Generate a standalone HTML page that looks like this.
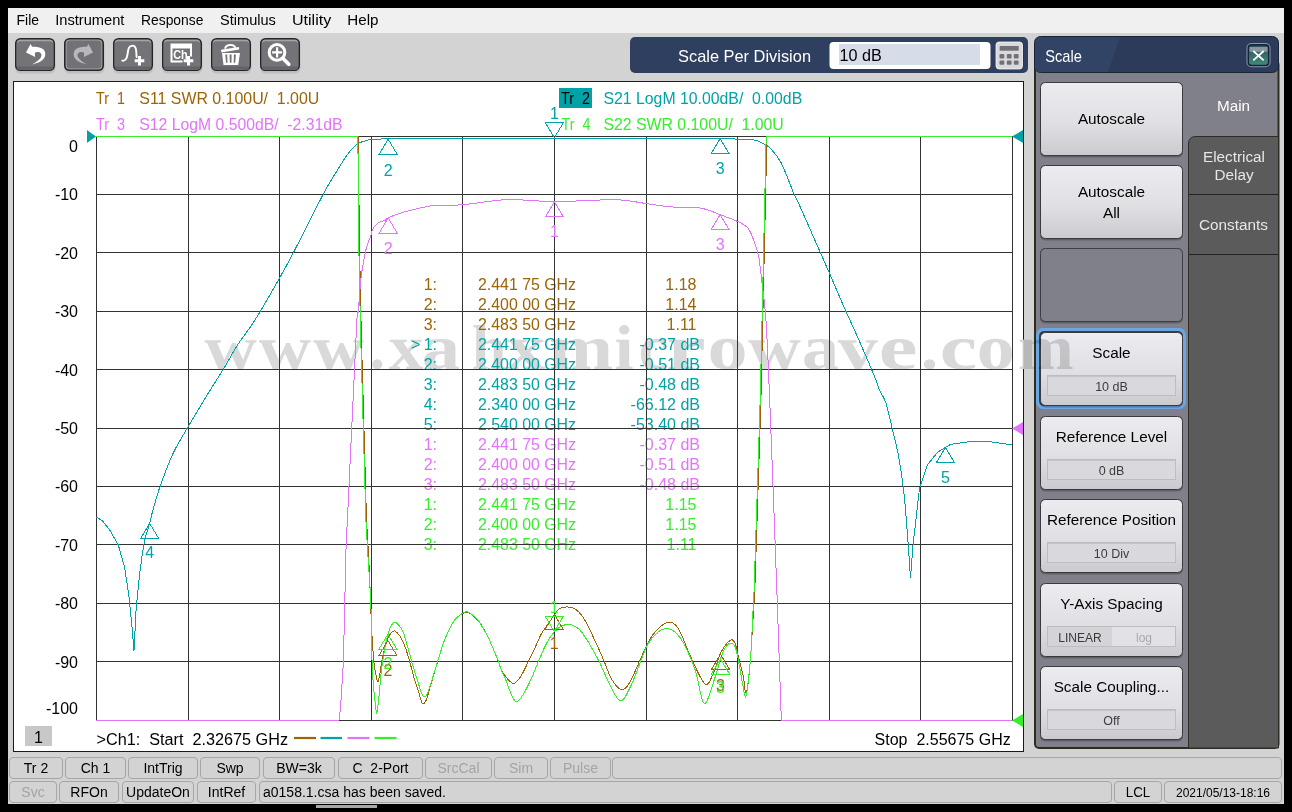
<!DOCTYPE html><html><head><meta charset="utf-8"><style>
*{margin:0;padding:0;box-sizing:border-box}
html,body{width:1292px;height:812px;overflow:hidden;background:#000;font-family:"Liberation Sans",sans-serif}
.a{position:absolute}
svg{position:absolute;left:0;top:0;overflow:visible}
text{font-family:"Liberation Sans",sans-serif}
</style></head><body><svg width="1292" height="812" viewBox="0 0 1292 812"><rect x="8" y="8" width="1276" height="25" fill="#f0f0f0"/><text x="16.5" y="25" font-size="14.5" fill="#000" textLength="22.5" lengthAdjust="spacingAndGlyphs" xml:space="preserve" >File</text><text x="55.2" y="25" font-size="14.5" fill="#000" textLength="69.2" lengthAdjust="spacingAndGlyphs" xml:space="preserve" >Instrument</text><text x="141" y="25" font-size="14.5" fill="#000" textLength="62.4" lengthAdjust="spacingAndGlyphs" xml:space="preserve" >Response</text><text x="220.1" y="25" font-size="14.5" fill="#000" textLength="55.8" lengthAdjust="spacingAndGlyphs" xml:space="preserve" >Stimulus</text><text x="292" y="25" font-size="14.5" fill="#000" textLength="39.2" lengthAdjust="spacingAndGlyphs" xml:space="preserve" >Utility</text><text x="347.3" y="25" font-size="14.5" fill="#000" textLength="31.2" lengthAdjust="spacingAndGlyphs" xml:space="preserve" >Help</text><rect x="8" y="33" width="1276" height="771" fill="#d3d3d3"/><g transform="translate(15,38)"><rect x="0" y="1.5" width="40.5" height="34" rx="5.5" fill="rgba(0,0,0,0.10)"/><rect x="0" y="0" width="40" height="33" rx="5.5" fill="#262628"/><rect x="1.6" y="1.6" width="36.8" height="29.8" rx="4" fill="#a4a4a8"/><rect x="1.8" y="3.2" width="36.4" height="28.2" rx="3.5" fill="#747478"/><rect x="1.8" y="28.5" width="36.4" height="3" rx="1.5" fill="#646468"/><path d="M11,14.4 L15.6,5.9 L17.1,8.8 C21,8.3 25.5,8.8 28.5,11.5 C31,14 30.8,18.5 28.5,21 C26,23.8 21.5,25.5 17,26.4 C20.5,24.5 24,22.5 25.8,19.5 C27,17.5 26.8,15 24.5,14.2 C23,13.7 21,14.1 19.9,14.6 L20.1,19.1 Z" fill="#fff"/></g><g transform="translate(64,38)"><rect x="0" y="1.5" width="40.5" height="34" rx="5.5" fill="rgba(0,0,0,0.10)"/><rect x="0" y="0" width="40" height="33" rx="5.5" fill="#262628"/><rect x="1.6" y="1.6" width="36.8" height="29.8" rx="4" fill="#a2a2a6"/><rect x="2.6" y="2.6" width="34.8" height="27.8" rx="3.5" fill="#727276"/><g transform="translate(40,0) scale(-1,1)"><path d="M11,14.4 L15.6,5.9 L17.1,8.8 C21,8.3 25.5,8.8 28.5,11.5 C31,14 30.8,18.5 28.5,21 C26,23.8 21.5,25.5 17,26.4 C20.5,24.5 24,22.5 25.8,19.5 C27,17.5 26.8,15 24.5,14.2 C23,13.7 21,14.1 19.9,14.6 L20.1,19.1 Z" fill="#b8b8bb"/></g></g><g transform="translate(113,38)"><rect x="0" y="1.5" width="40.5" height="34" rx="5.5" fill="rgba(0,0,0,0.10)"/><rect x="0" y="0" width="40" height="33" rx="5.5" fill="#262628"/><rect x="1.6" y="1.6" width="36.8" height="29.8" rx="4" fill="#a4a4a8"/><rect x="1.8" y="3.2" width="36.4" height="28.2" rx="3.5" fill="#747478"/><rect x="1.8" y="28.5" width="36.4" height="3" rx="1.5" fill="#646468"/><path d="M9.3,22.6 C12.5,23.2 13.8,20.5 14.5,16.5 C15.2,12 15.3,7.8 19.5,7.6 C23.2,7.6 23.2,12 23.6,19" fill="none" stroke="#fff" stroke-width="1.9" stroke-linecap="round"/><path d="M25,18 h3 v3.3 h3.3 v3 h-3.3 v3.3 h-3 v-3.3 h-3.3 v-3 h3.3 z" fill="#fff"/></g><g transform="translate(162,38)"><rect x="0" y="1.5" width="40.5" height="34" rx="5.5" fill="rgba(0,0,0,0.10)"/><rect x="0" y="0" width="40" height="33" rx="5.5" fill="#262628"/><rect x="1.6" y="1.6" width="36.8" height="29.8" rx="4" fill="#a4a4a8"/><rect x="1.8" y="3.2" width="36.4" height="28.2" rx="3.5" fill="#747478"/><rect x="1.8" y="28.5" width="36.4" height="3" rx="1.5" fill="#646468"/><path d="M8.5,5.5 h21.5 v13 h-2 v-8 h-17.5 v12 h10 v2 h-12 z" fill="#fff"/><text x="11.2" y="20.8" style="font-weight:bold" font-size="12.5" fill="#fff" textLength="14.5" lengthAdjust="spacingAndGlyphs">Ch</text><path d="M25,18 h3 v3.3 h3.3 v3 h-3.3 v3.3 h-3 v-3.3 h-3.3 v-3 h3.3 z" fill="#fff"/></g><g transform="translate(211,38)"><rect x="0" y="1.5" width="40.5" height="34" rx="5.5" fill="rgba(0,0,0,0.10)"/><rect x="0" y="0" width="40" height="33" rx="5.5" fill="#262628"/><rect x="1.6" y="1.6" width="36.8" height="29.8" rx="4" fill="#a4a4a8"/><rect x="1.8" y="3.2" width="36.4" height="28.2" rx="3.5" fill="#747478"/><rect x="1.8" y="28.5" width="36.4" height="3" rx="1.5" fill="#646468"/><path d="M14.2,10.8 C14.5,6.5 23,5.5 24.3,9.8" fill="none" stroke="#fff" stroke-width="2"/><path d="M10,11.8 L27.8,9 L28.2,11.6 L10.4,14.4 Z" fill="#fff"/><path d="M11,15 H29 L27.2,27 H12.5 Z M14.3,16.6 L15,24.7 H16.5 L16.2,16.6 Z M18.6,16.6 L18.8,24.7 H20.5 L20.6,16.6 Z M22.9,16.6 L22.7,24.7 H24.2 L24.9,16.6 Z" fill="#fff" fill-rule="evenodd"/></g><g transform="translate(260,38)"><rect x="0" y="1.5" width="40.5" height="34" rx="5.5" fill="rgba(0,0,0,0.10)"/><rect x="0" y="0" width="40" height="33" rx="5.5" fill="#262628"/><rect x="1.6" y="1.6" width="36.8" height="29.8" rx="4" fill="#a4a4a8"/><rect x="1.8" y="3.2" width="36.4" height="28.2" rx="3.5" fill="#747478"/><rect x="1.8" y="28.5" width="36.4" height="3" rx="1.5" fill="#646468"/><circle cx="17" cy="14.4" r="7.8" fill="none" stroke="#fff" stroke-width="3"/><line x1="22.8" y1="20.3" x2="28.8" y2="26.3" stroke="#fff" stroke-width="3.6" stroke-linecap="round"/><path d="M16,9.3 h2.2 v3.9 h3.9 v2.3 h-3.9 v3.9 h-2.2 v-3.9 h-3.9 v-2.3 h3.9 z" fill="#fff"/></g><rect x="630" y="37" width="398" height="36" rx="5" fill="#2e3f5f"/><text x="678" y="61.8" font-size="16.4" fill="#fff" textLength="133" lengthAdjust="spacingAndGlyphs" xml:space="preserve" >Scale Per Division</text><rect x="829.5" y="42" width="161" height="27" rx="4" fill="#fff"/><rect x="839" y="44" width="141" height="21" fill="#d6dde9"/><text x="839.5" y="60.8" font-size="16.2" fill="#000" xml:space="preserve" >10 dB</text><rect x="995" y="41" width="28.5" height="29" rx="4.5" fill="#1d2a42"/><rect x="995.5" y="41.5" width="27.5" height="28" rx="4" fill="#e4e4ea"/><rect x="997" y="43" width="25" height="25" rx="3" fill="#d8d8de"/><rect x="999.7" y="46" width="19" height="4.7" fill="#727272"/><rect x="999.5" y="54" width="4.8" height="4.4" rx="1" fill="#727272"/><rect x="999.5" y="60.4" width="4.8" height="4.4" rx="1" fill="#727272"/><rect x="1006.8" y="54" width="4.8" height="4.4" rx="1" fill="#727272"/><rect x="1006.8" y="60.4" width="4.8" height="4.4" rx="1" fill="#727272"/><rect x="1013.8" y="54" width="4.8" height="4.4" rx="1" fill="#727272"/><rect x="1013.8" y="60.4" width="4.8" height="4.4" rx="1" fill="#727272"/><rect x="13.5" y="81.5" width="1010" height="670" rx="0" fill="#fff" stroke="#1c1c0c" stroke-width="1"/><g font-size="64" fill="#d9d9d9"><text style="font-family:'Liberation Serif',serif;font-weight:bold" x="204.4" y="369" textLength="52.3" lengthAdjust="spacingAndGlyphs">w</text><text style="font-family:'Liberation Serif',serif;font-weight:bold" x="258.8" y="369" textLength="52.3" lengthAdjust="spacingAndGlyphs">w</text><text style="font-family:'Liberation Serif',serif;font-weight:bold" x="313.2" y="369" textLength="50.9" lengthAdjust="spacingAndGlyphs">w</text><text style="font-family:'Liberation Serif',serif;font-weight:bold" x="369.4" y="369" textLength="15.5" lengthAdjust="spacingAndGlyphs">.</text><text style="font-family:'Liberation Serif',serif;font-weight:bold" x="388.8" y="369" textLength="34.7" lengthAdjust="spacingAndGlyphs">x</text><text style="font-family:'Liberation Serif',serif;font-weight:bold" x="421.7" y="369" textLength="38.3" lengthAdjust="spacingAndGlyphs">a</text><text style="font-family:'Liberation Serif',serif;font-weight:bold" x="471.7" y="369" textLength="34.6" lengthAdjust="spacingAndGlyphs">h</text><text style="font-family:'Liberation Serif',serif;font-weight:bold" x="506.0" y="369" textLength="39.4" lengthAdjust="spacingAndGlyphs">x</text><text style="font-family:'Liberation Serif',serif;font-weight:bold" x="548.9" y="369" textLength="64.1" lengthAdjust="spacingAndGlyphs">m</text><text style="font-family:'Liberation Serif',serif;font-weight:bold" x="614.6" y="369" textLength="19.1" lengthAdjust="spacingAndGlyphs">i</text><text style="font-family:'Liberation Serif',serif;font-weight:bold" x="638.4" y="369" textLength="30.0" lengthAdjust="spacingAndGlyphs">c</text><text style="font-family:'Liberation Serif',serif;font-weight:bold" x="666.3" y="369" textLength="39.5" lengthAdjust="spacingAndGlyphs">r</text><text style="font-family:'Liberation Serif',serif;font-weight:bold" x="707.4" y="369" textLength="40.1" lengthAdjust="spacingAndGlyphs">o</text><text style="font-family:'Liberation Serif',serif;font-weight:bold" x="748.2" y="369" textLength="52.6" lengthAdjust="spacingAndGlyphs">w</text><text style="font-family:'Liberation Serif',serif;font-weight:bold" x="801.8" y="369" textLength="37.4" lengthAdjust="spacingAndGlyphs">a</text><text style="font-family:'Liberation Serif',serif;font-weight:bold" x="837.7" y="369" textLength="40.1" lengthAdjust="spacingAndGlyphs">v</text><text style="font-family:'Liberation Serif',serif;font-weight:bold" x="878.7" y="369" textLength="38.7" lengthAdjust="spacingAndGlyphs">e</text><text style="font-family:'Liberation Serif',serif;font-weight:bold" x="920.8" y="369" textLength="17.6" lengthAdjust="spacingAndGlyphs">.</text><text style="font-family:'Liberation Serif',serif;font-weight:bold" x="939.7" y="369" textLength="37.3" lengthAdjust="spacingAndGlyphs">c</text><text style="font-family:'Liberation Serif',serif;font-weight:bold" x="976.7" y="369" textLength="38.0" lengthAdjust="spacingAndGlyphs">o</text><text style="font-family:'Liberation Serif',serif;font-weight:bold" x="1017.7" y="369" textLength="55.9" lengthAdjust="spacingAndGlyphs">m</text></g><g font-size="17"><text x="96" y="104" fill="#9c6406" textLength="29" lengthAdjust="spacingAndGlyphs" xml:space="preserve">Tr  1</text><text x="139.3" y="104" fill="#9c6406" textLength="180" lengthAdjust="spacingAndGlyphs" xml:space="preserve">S11 SWR 0.100U/  1.00U</text><text x="96" y="129.6" fill="#e274fa" textLength="29" lengthAdjust="spacingAndGlyphs" xml:space="preserve">Tr  3</text><text x="139.3" y="129.6" fill="#e274fa" textLength="203.2" lengthAdjust="spacingAndGlyphs" xml:space="preserve">S12 LogM 0.500dB/  -2.31dB</text><rect x="559" y="88" width="33" height="20" fill="#00a2a8"/><text x="561" y="104" fill="#000" textLength="29" lengthAdjust="spacingAndGlyphs" xml:space="preserve">Tr  2</text><text x="603.5" y="104" fill="#00a2a8" textLength="198.7" lengthAdjust="spacingAndGlyphs" xml:space="preserve">S21 LogM 10.00dB/  0.00dB</text><text x="561.5" y="129.6" fill="#36ee2c" textLength="29" lengthAdjust="spacingAndGlyphs" xml:space="preserve">Tr  4</text><text x="603.5" y="129.6" fill="#36ee2c" textLength="180.3" lengthAdjust="spacingAndGlyphs" xml:space="preserve">S22 SWR 0.100U/  1.00U</text></g><g font-size="16" fill="#000"><text x="78" y="151.5" text-anchor="end">0</text><text x="78" y="200" text-anchor="end">-10</text><text x="78" y="258.5" text-anchor="end">-20</text><text x="78" y="317" text-anchor="end">-30</text><text x="78" y="375.5" text-anchor="end">-40</text><text x="78" y="434" text-anchor="end">-50</text><text x="78" y="492" text-anchor="end">-60</text><text x="78" y="550.5" text-anchor="end">-70</text><text x="78" y="609" text-anchor="end">-80</text><text x="78" y="667.5" text-anchor="end">-90</text><text x="78" y="713.5" text-anchor="end">-100</text></g><g font-size="16"><text x="437" y="290" fill="#9c6406" text-anchor="end">1:</text><text x="478" y="290" fill="#9c6406" textLength="98" lengthAdjust="spacingAndGlyphs">2.441 75 GHz</text><text x="696.5" y="290" fill="#9c6406" text-anchor="end">1.18</text><text x="437" y="310" fill="#9c6406" text-anchor="end">2:</text><text x="478" y="310" fill="#9c6406" textLength="98" lengthAdjust="spacingAndGlyphs">2.400 00 GHz</text><text x="696.5" y="310" fill="#9c6406" text-anchor="end">1.14</text><text x="437" y="330" fill="#9c6406" text-anchor="end">3:</text><text x="478" y="330" fill="#9c6406" textLength="98" lengthAdjust="spacingAndGlyphs">2.483 50 GHz</text><text x="696.5" y="330" fill="#9c6406" text-anchor="end">1.11</text><text x="411" y="350" fill="#00a2a8">&gt;</text><text x="437" y="350" fill="#00a2a8" text-anchor="end">1:</text><text x="478" y="350" fill="#00a2a8" textLength="98" lengthAdjust="spacingAndGlyphs">2.441 75 GHz</text><text x="700" y="350" fill="#00a2a8" text-anchor="end">-0.37 dB</text><text x="437" y="370" fill="#00a2a8" text-anchor="end">2:</text><text x="478" y="370" fill="#00a2a8" textLength="98" lengthAdjust="spacingAndGlyphs">2.400 00 GHz</text><text x="700" y="370" fill="#00a2a8" text-anchor="end">-0.51 dB</text><text x="437" y="390" fill="#00a2a8" text-anchor="end">3:</text><text x="478" y="390" fill="#00a2a8" textLength="98" lengthAdjust="spacingAndGlyphs">2.483 50 GHz</text><text x="700" y="390" fill="#00a2a8" text-anchor="end">-0.48 dB</text><text x="437" y="410" fill="#00a2a8" text-anchor="end">4:</text><text x="478" y="410" fill="#00a2a8" textLength="98" lengthAdjust="spacingAndGlyphs">2.340 00 GHz</text><text x="700" y="410" fill="#00a2a8" text-anchor="end">-66.12 dB</text><text x="437" y="430" fill="#00a2a8" text-anchor="end">5:</text><text x="478" y="430" fill="#00a2a8" textLength="98" lengthAdjust="spacingAndGlyphs">2.540 00 GHz</text><text x="700" y="430" fill="#00a2a8" text-anchor="end">-53.40 dB</text><text x="437" y="450" fill="#e274fa" text-anchor="end">1:</text><text x="478" y="450" fill="#e274fa" textLength="98" lengthAdjust="spacingAndGlyphs">2.441 75 GHz</text><text x="700" y="450" fill="#e274fa" text-anchor="end">-0.37 dB</text><text x="437" y="470" fill="#e274fa" text-anchor="end">2:</text><text x="478" y="470" fill="#e274fa" textLength="98" lengthAdjust="spacingAndGlyphs">2.400 00 GHz</text><text x="700" y="470" fill="#e274fa" text-anchor="end">-0.51 dB</text><text x="437" y="490" fill="#e274fa" text-anchor="end">3:</text><text x="478" y="490" fill="#e274fa" textLength="98" lengthAdjust="spacingAndGlyphs">2.483 50 GHz</text><text x="700" y="490" fill="#e274fa" text-anchor="end">-0.48 dB</text><text x="437" y="510" fill="#36ee2c" text-anchor="end">1:</text><text x="478" y="510" fill="#36ee2c" textLength="98" lengthAdjust="spacingAndGlyphs">2.441 75 GHz</text><text x="696.5" y="510" fill="#36ee2c" text-anchor="end">1.15</text><text x="437" y="530" fill="#36ee2c" text-anchor="end">2:</text><text x="478" y="530" fill="#36ee2c" textLength="98" lengthAdjust="spacingAndGlyphs">2.400 00 GHz</text><text x="696.5" y="530" fill="#36ee2c" text-anchor="end">1.15</text><text x="437" y="550" fill="#36ee2c" text-anchor="end">3:</text><text x="478" y="550" fill="#36ee2c" textLength="98" lengthAdjust="spacingAndGlyphs">2.483 50 GHz</text><text x="696.5" y="550" fill="#36ee2c" text-anchor="end">1.11</text></g><g stroke="#333333" stroke-width="1" shape-rendering="crispEdges"><line x1="96.5" y1="136" x2="96.5" y2="721" /><line x1="188.5" y1="136" x2="188.5" y2="721" /><line x1="279.5" y1="136" x2="279.5" y2="721" /><line x1="371.5" y1="136" x2="371.5" y2="721" /><line x1="462.5" y1="136" x2="462.5" y2="721" /><line x1="554.5" y1="136" x2="554.5" y2="721" /><line x1="646.5" y1="136" x2="646.5" y2="721" /><line x1="737.5" y1="136" x2="737.5" y2="721" /><line x1="829.5" y1="136" x2="829.5" y2="721" /><line x1="920.5" y1="136" x2="920.5" y2="721" /><line x1="1012.5" y1="136" x2="1012.5" y2="721" /><line x1="96" y1="136.5" x2="1013" y2="136.5" /><line x1="96" y1="194.5" x2="1013" y2="194.5" /><line x1="96" y1="252.5" x2="1013" y2="252.5" /><line x1="96" y1="311.5" x2="1013" y2="311.5" /><line x1="96" y1="369.5" x2="1013" y2="369.5" /><line x1="96" y1="428.5" x2="1013" y2="428.5" /><line x1="96" y1="486.5" x2="1013" y2="486.5" /><line x1="96" y1="544.5" x2="1013" y2="544.5" /><line x1="96" y1="603.5" x2="1013" y2="603.5" /><line x1="96" y1="661.5" x2="1013" y2="661.5" /><line x1="96" y1="720.5" x2="1013" y2="720.5" /></g><g fill="none" stroke-width="1" stroke-linejoin="round" shape-rendering="crispEdges"><path d="M96.0,136.5 L358.5,136.5 L359.2,230.0 L361.2,330.0 L366.5,520.0 L368.8,560.0 L370.5,600.0 L371.6,629.6 C372.0,635.0 373.1,654.4 373.9,662.0 C374.6,669.6 375.4,672.1 376.1,675.4 C376.8,678.7 377.4,682.2 378.0,682.0 C378.6,681.8 379.0,678.2 379.8,673.9 C380.6,669.6 381.5,661.9 382.7,656.2 C383.9,650.6 385.8,643.8 387.2,640.0 C388.6,636.2 389.7,634.7 390.9,633.2 C392.1,631.7 393.0,630.4 394.6,631.0 C396.2,631.6 398.7,634.3 400.5,637.0 C402.3,639.7 403.8,643.1 405.3,647.3 C406.9,651.5 408.3,656.9 409.8,662.1 C411.3,667.3 412.7,673.4 414.2,678.3 C415.7,683.2 417.2,687.4 418.6,691.6 C420.0,695.8 421.1,701.9 422.3,703.4 C423.5,704.9 424.6,703.5 426.0,700.5 C427.4,697.5 428.5,692.4 430.5,685.7 C432.5,679.1 435.4,668.5 437.9,660.6 C440.3,652.7 442.5,645.0 445.2,638.4 C447.9,631.8 451.4,624.8 454.1,620.7 C456.8,616.6 459.3,615.4 461.5,614.0 C463.7,612.6 466.0,612.7 467.4,612.6 C468.8,612.5 468.0,612.0 470.0,613.5 C472.0,615.0 476.1,617.8 479.2,621.9 C482.3,626.0 485.4,631.8 488.5,638.1 C491.6,644.4 495.6,654.5 497.7,659.6 C499.8,664.7 499.3,665.7 500.8,668.8 C502.3,671.9 504.7,675.6 506.9,678.1 C509.1,680.6 511.5,683.8 513.8,683.5 C516.1,683.2 518.3,680.2 520.8,676.5 C523.2,672.8 526.2,665.8 528.5,661.2 C530.8,656.6 532.6,653.2 534.6,648.8 C536.6,644.4 538.8,638.8 540.8,635.0 C542.8,631.2 544.6,629.1 546.9,625.8 C549.1,622.5 552.2,617.8 554.3,615.0 C556.3,612.2 557.0,610.1 559.2,608.8 C561.4,607.4 564.8,606.8 567.6,606.9 C570.4,607.0 573.0,607.4 576.0,609.7 C579.0,612.0 581.0,613.1 585.3,620.9 C589.6,628.6 597.7,646.6 602.0,656.2 C606.3,665.8 608.0,672.9 611.3,678.5 C614.5,684.1 618.4,689.0 621.5,689.6 C624.6,690.2 626.6,687.5 629.9,682.2 C633.1,676.9 637.3,665.8 641.0,658.0 C644.7,650.2 647.9,641.6 652.2,635.7 C656.5,629.8 662.7,623.9 667.0,622.7 C671.3,621.5 674.2,622.4 678.2,628.3 C682.2,634.2 686.7,648.7 691.2,658.0 C695.7,667.3 701.4,681.5 705.1,684.0 C708.8,686.5 710.9,678.1 713.5,672.9 C716.1,667.6 718.1,657.9 720.9,652.5 C723.7,647.1 727.9,641.9 730.2,640.4 C732.6,638.9 733.6,640.5 735.0,643.2 C736.4,645.9 736.9,651.0 738.3,656.5 C739.7,662.0 742.1,670.3 743.3,676.4 C744.5,682.5 744.9,691.9 745.7,693.0 C746.5,694.1 747.4,689.1 748.2,683.0 C749.0,676.9 750.3,660.9 750.7,656.5 L754.8,590.0 L760.9,400.0 L764.1,260.0 L766.9,136.5 L1012.0,136.5" stroke="#9c6406"/><path d="M96.0,516.8 L102.6,520.9 L109.9,530.4 L118.3,545.0 L124.5,567.0 L128.7,594.2 L131.9,625.6 L134.0,650.8 L136.1,608.9 C136.8,602.3 138.9,580.3 140.3,569.1 C141.7,557.9 142.8,549.6 144.4,541.9 C146.0,534.2 148.3,528.2 149.7,523.0 C151.1,517.8 151.1,516.6 152.8,510.5 C154.6,504.4 156.8,495.6 160.2,486.1 C163.6,476.6 168.4,463.2 173.1,453.3 C177.8,443.4 182.9,435.8 188.3,426.4 C193.8,417.0 200.0,406.8 205.8,397.2 C211.7,387.6 217.9,378.1 223.4,369.1 C228.9,360.1 233.3,351.6 238.6,343.4 C243.9,335.2 248.2,330.9 255.0,320.0 C261.9,309.1 273.1,289.4 279.7,277.8 C286.3,266.2 287.0,264.9 294.4,250.7 C301.8,236.5 317.0,205.9 324.0,192.8 C331.0,179.7 332.4,178.3 336.3,171.9 C340.2,165.5 344.7,158.5 347.4,154.6 C350.1,150.7 350.6,150.3 352.3,148.5 C354.1,146.7 355.8,144.7 357.9,143.5 C359.9,142.3 361.8,141.8 364.6,141.1 C367.4,140.4 366.1,139.6 374.5,139.2 C382.9,138.8 384.1,138.9 415.0,138.7 C445.9,138.5 512.3,138.2 560.0,138.2 C607.7,138.2 669.4,138.4 701.0,138.6 C732.6,138.8 739.6,138.9 749.5,139.5 C759.4,140.1 757.2,140.9 760.6,142.3 C764.0,143.7 766.5,144.5 769.9,147.9 C773.3,151.3 777.1,155.0 781.1,162.7 C785.1,170.4 791.0,187.0 794.1,194.3 C797.2,201.6 795.7,196.8 800.0,206.4 C804.3,216.0 815.2,240.9 820.1,252.0 C825.0,263.1 824.9,262.8 829.2,272.7 C833.5,282.6 841.0,300.3 846.0,311.5 C851.0,322.7 854.2,329.2 858.9,340.0 C863.6,350.8 871.0,367.8 874.4,376.1 C877.8,384.4 877.5,385.5 879.4,390.0 C881.3,394.5 883.8,396.4 885.9,402.9 C888.0,409.4 890.1,419.7 892.3,428.8 C894.4,437.9 896.8,446.5 898.8,457.3 C900.8,468.1 902.5,479.7 904.0,493.5 C905.5,507.3 907.2,532.3 907.9,540.1 L910.5,577.6 L913.0,545.2 L919.5,488.3 L927.3,465.0 L937.6,452.1 L950.6,444.3 L968.7,441.7 L989.4,441.7 L1012.0,444.9" stroke="#00a2a8"/><path d="M96.0,720.0 L339.3,720.0 L341.0,700.0 L343.4,661.8 L346.1,545.2 L347.4,520.0 C348.9,488.3 354.7,364.2 356.4,330.0 C358.1,295.8 357.4,319.6 357.8,314.8 C358.2,310.0 358.6,307.5 359.1,301.2 C359.7,294.9 360.3,283.7 361.1,276.9 C361.9,270.1 362.9,265.6 363.8,260.6 C364.7,255.6 365.5,251.2 366.6,247.1 C367.7,243.0 369.5,239.4 370.6,236.2 C371.7,233.0 372.0,230.3 373.3,228.1 C374.6,225.8 376.7,224.0 378.7,222.7 C380.7,221.3 383.9,220.8 385.5,220.0 C387.1,219.2 385.6,219.2 388.2,218.0 C390.8,216.8 393.8,214.9 401.0,212.9 C408.2,210.9 421.3,207.2 431.5,205.8 C441.7,204.5 449.5,205.8 462.0,204.8 C474.5,203.8 491.3,200.2 506.7,199.7 C522.1,199.2 540.6,201.6 554.4,201.7 C568.2,201.8 580.4,200.6 589.7,200.3 C599.0,200.0 604.3,199.9 610.2,199.9 C616.1,199.9 619.0,199.7 625.0,200.3 C631.0,200.9 638.6,202.5 646.4,203.6 C654.1,204.7 662.4,206.1 671.5,206.9 C680.6,207.7 693.1,206.9 701.2,208.2 C709.3,209.5 713.9,212.4 720.1,214.7 C726.3,217.0 733.7,219.6 738.3,221.8 C742.9,224.0 745.1,224.8 747.6,227.7 C750.1,230.5 751.6,234.8 753.2,238.9 C754.9,243.0 756.5,248.5 757.5,252.0 C758.5,255.5 758.5,254.8 759.3,260.0 C760.0,265.2 760.9,273.1 762.0,283.0 C763.1,292.9 764.6,299.8 765.9,319.3 C767.2,338.8 767.8,353.2 769.7,400.0 C771.6,446.8 776.0,566.7 777.2,600.0 L781.3,720.0 L1012.0,720.0" stroke="#e274fa"/><path d="M96.0,136.5 L357.9,136.5 L358.5,230.0 L360.5,330.0 L365.9,520.0 L368.2,560.0 L370.9,600.0 L371.6,651.7 C371.9,656.6 372.5,672.7 373.1,681.3 C373.7,689.9 374.7,698.1 375.3,703.4 C375.9,708.7 376.2,714.2 376.8,713.0 C377.4,711.8 378.2,703.0 379.0,696.0 C379.8,689.0 380.6,677.7 381.3,671.0 C382.1,664.3 382.5,661.7 383.5,656.0 C384.5,650.3 385.8,642.2 387.2,637.0 C388.6,631.8 390.2,627.5 391.6,625.0 C393.0,622.5 393.8,621.7 395.3,622.2 C396.9,622.7 399.5,626.1 400.9,628.1 C402.3,630.1 402.5,630.1 403.9,634.0 C405.2,637.9 407.5,646.5 409.0,651.7 C410.5,656.9 411.3,660.3 412.7,665.0 C414.1,669.7 415.7,675.1 417.2,679.8 C418.7,684.5 420.4,690.3 421.6,693.1 C422.8,695.9 423.6,696.8 424.6,696.8 C425.6,696.8 426.3,695.9 427.5,693.1 C428.7,690.3 430.3,685.2 432.0,679.8 C433.7,674.4 435.7,667.5 437.9,660.6 C440.1,653.7 442.5,645.0 445.2,638.4 C447.9,631.8 451.4,624.8 454.1,620.7 C456.8,616.6 459.3,615.5 461.5,614.0 C463.7,612.5 465.1,611.3 467.4,611.8 C469.6,612.3 473.0,615.3 475.0,617.0 C477.0,618.7 476.9,618.4 479.2,621.9 C481.4,625.4 485.4,631.8 488.5,638.1 C491.6,644.4 495.6,654.5 497.7,659.6 C499.8,664.7 499.3,664.9 500.8,668.8 C502.3,672.6 505.1,678.3 506.9,682.7 C508.7,687.1 509.8,691.8 511.5,695.0 C513.2,698.2 514.9,702.1 516.9,701.9 C518.9,701.6 521.4,697.5 523.8,693.5 C526.2,689.5 528.9,683.8 531.5,678.1 C534.1,672.5 536.6,665.5 539.2,659.6 C541.8,653.7 544.4,647.3 546.9,642.7 C549.4,638.1 551.7,634.7 554.3,631.9 C556.9,629.1 559.6,627.0 562.3,625.8 C565.0,624.6 567.2,623.6 570.4,624.6 C573.6,625.6 577.0,626.1 581.6,632.0 C586.2,637.9 593.7,651.2 598.3,659.9 C602.9,668.6 605.7,677.2 609.4,684.0 C613.1,690.8 616.9,700.8 620.6,700.8 C624.3,700.8 627.1,693.6 631.7,684.0 C636.4,674.4 642.9,652.4 648.5,643.2 C654.1,634.0 660.0,629.6 665.2,628.7 C670.5,627.8 675.0,630.9 680.0,637.6 C685.0,644.4 690.9,658.2 694.9,669.2 C698.9,680.2 700.8,702.3 704.2,703.5 C707.6,704.7 712.5,684.2 715.3,676.6 C718.1,669.0 719.2,662.8 720.8,658.1 C722.4,653.4 723.5,650.7 725.0,648.2 C726.5,645.7 728.3,643.5 730.0,643.2 C731.7,642.9 733.6,643.7 735.0,646.5 C736.4,649.3 737.1,653.7 738.3,659.8 C739.5,665.9 741.2,676.8 742.4,683.0 C743.6,689.2 744.7,697.5 745.7,697.2 C746.7,696.9 747.4,688.2 748.2,681.4 C749.0,674.6 750.0,666.2 750.7,656.5 C751.4,646.8 752.1,628.8 752.4,623.2 L754.1,590.0 L760.2,400.0 L763.4,260.0 L766.2,136.5 L1012.0,136.5" stroke="#36ee2c"/></g><polygon points="554.4,137.7 545.4,122.7 563.4,122.7" fill="none" stroke="#00a2a8" stroke-width="1" shape-rendering="crispEdges"/><text x="554.4" y="119.0" fill="#00a2a8" font-size="16" text-anchor="middle">1</text><polygon points="388.2,139.3 379.2,154.3 397.2,154.3" fill="none" stroke="#00a2a8" stroke-width="1" shape-rendering="crispEdges"/><text x="388.2" y="175.5" fill="#00a2a8" font-size="16" text-anchor="middle">2</text><polygon points="720.1,138.6 711.1,153.6 729.1,153.6" fill="none" stroke="#00a2a8" stroke-width="1" shape-rendering="crispEdges"/><text x="720.1" y="173.5" fill="#00a2a8" font-size="16" text-anchor="middle">3</text><polygon points="149.7,523.5 140.7,538.5 158.7,538.5" fill="none" stroke="#00a2a8" stroke-width="1" shape-rendering="crispEdges"/><text x="149.7" y="558.0" fill="#00a2a8" font-size="16" text-anchor="middle">4</text><polygon points="945.4,447.4 936.4,462.4 954.4,462.4" fill="none" stroke="#00a2a8" stroke-width="1" shape-rendering="crispEdges"/><text x="945.4" y="483.0" fill="#00a2a8" font-size="16" text-anchor="middle">5</text><polygon points="554.4,201.7 545.4,216.7 563.4,216.7" fill="none" stroke="#e274fa" stroke-width="1" shape-rendering="crispEdges"/><text x="554.4" y="237.0" fill="#e274fa" font-size="16" text-anchor="middle">1</text><polygon points="388.2,218.0 379.2,233.0 397.2,233.0" fill="none" stroke="#e274fa" stroke-width="1" shape-rendering="crispEdges"/><text x="388.2" y="254.0" fill="#e274fa" font-size="16" text-anchor="middle">2</text><polygon points="720.1,214.7 711.1,229.7 729.1,229.7" fill="none" stroke="#e274fa" stroke-width="1" shape-rendering="crispEdges"/><text x="720.1" y="249.5" fill="#e274fa" font-size="16" text-anchor="middle">3</text><polygon points="554.3,614.2 545.3,629.2 563.3,629.2" fill="none" stroke="#9c6406" stroke-width="1" shape-rendering="crispEdges"/><text x="554.3" y="649.0" fill="#9c6406" font-size="16" text-anchor="middle">1</text><polygon points="387.9,640.5 378.9,655.5 396.9,655.5" fill="none" stroke="#9c6406" stroke-width="1" shape-rendering="crispEdges"/><text x="387.9" y="676.0" fill="#9c6406" font-size="16" text-anchor="middle">2</text><polygon points="720.5,654.3 711.5,669.3 729.5,669.3" fill="none" stroke="#9c6406" stroke-width="1" shape-rendering="crispEdges"/><text x="720.5" y="691.0" fill="#9c6406" font-size="16" text-anchor="middle">3</text><polygon points="554.3,631.5 545.3,616.5 563.3,616.5" fill="none" stroke="#36ee2c" stroke-width="1" shape-rendering="crispEdges"/><text x="554.3" y="613.0" fill="#36ee2c" font-size="16" text-anchor="middle">1</text><polygon points="387.9,634.2 378.9,649.2 396.9,649.2" fill="none" stroke="#36ee2c" stroke-width="1" shape-rendering="crispEdges"/><text x="387.9" y="669.0" fill="#36ee2c" font-size="16" text-anchor="middle">2</text><polygon points="720.5,659.0 711.5,674.0 729.5,674.0" fill="none" stroke="#36ee2c" stroke-width="1" shape-rendering="crispEdges"/><text x="720.5" y="693.0" fill="#36ee2c" font-size="16" text-anchor="middle">3</text><polygon points="87,130 96,136.5 87,143" fill="#00a2a8"/><polygon points="1023,130 1012,136.5 1023,143" fill="#00a2a8"/><polygon points="1023,422 1012,428.5 1023,435" fill="#e274fa"/><polygon points="1023,714 1012,720.5 1023,727" fill="#36ee2c"/><rect x="25" y="726" width="27" height="20" fill="#c8c8c8"/><text x="38.5" y="743" font-size="16" text-anchor="middle" fill="#000">1</text><text x="96.5" y="744.5" font-size="16" fill="#000" textLength="191.5" lengthAdjust="spacingAndGlyphs" xml:space="preserve">&gt;Ch1:  Start  2.32675 GHz</text><g stroke-width="2.2"><line x1="294" y1="738" x2="316" y2="738" stroke="#9c6406"/><line x1="320.5" y1="738" x2="342" y2="738" stroke="#00a2a8"/><line x1="347.5" y1="738" x2="369.5" y2="738" stroke="#e274fa"/><line x1="374.5" y1="738" x2="396.5" y2="738" stroke="#36ee2c"/></g><text x="1010.7" y="744.5" font-size="16" fill="#000" text-anchor="end" xml:space="preserve">Stop  2.55675 GHz</text><rect x="9.5" y="757.5" width="53" height="21" rx="3.5" fill="#d3d3d3" stroke="#a6a6a6"/><text x="36.0" y="773" font-size="14" fill="#000" text-anchor="middle" xml:space="preserve" >Tr 2</text><rect x="65.5" y="757.5" width="60" height="21" rx="3.5" fill="#d3d3d3" stroke="#a6a6a6"/><text x="95.5" y="773" font-size="14" fill="#000" text-anchor="middle" xml:space="preserve" >Ch 1</text><rect x="128.5" y="757.5" width="69" height="21" rx="3.5" fill="#d3d3d3" stroke="#a6a6a6"/><text x="163.0" y="773" font-size="14" fill="#000" text-anchor="middle" xml:space="preserve" >IntTrig</text><rect x="200.5" y="757.5" width="59" height="21" rx="3.5" fill="#d3d3d3" stroke="#a6a6a6"/><text x="230.0" y="773" font-size="14" fill="#000" text-anchor="middle" xml:space="preserve" >Swp</text><rect x="263.5" y="757.5" width="71" height="21" rx="3.5" fill="#d3d3d3" stroke="#a6a6a6"/><text x="299.0" y="773" font-size="14" fill="#000" text-anchor="middle" xml:space="preserve" >BW=3k</text><rect x="338.5" y="757.5" width="84" height="21" rx="3.5" fill="#d3d3d3" stroke="#a6a6a6"/><text x="380.5" y="773" font-size="14" fill="#000" text-anchor="middle" xml:space="preserve" >C  2-Port</text><rect x="425.5" y="757.5" width="66" height="21" rx="3.5" fill="#d3d3d3" stroke="#a6a6a6"/><text x="458.5" y="773" font-size="14" fill="#a4a4a4" text-anchor="middle" xml:space="preserve" >SrcCal</text><rect x="494.5" y="757.5" width="53" height="21" rx="3.5" fill="#d3d3d3" stroke="#a6a6a6"/><text x="521.0" y="773" font-size="14" fill="#a4a4a4" text-anchor="middle" xml:space="preserve" >Sim</text><rect x="550.5" y="757.5" width="60" height="21" rx="3.5" fill="#d3d3d3" stroke="#a6a6a6"/><text x="580.5" y="773" font-size="14" fill="#a4a4a4" text-anchor="middle" xml:space="preserve" >Pulse</text><rect x="612.5" y="757.5" width="669" height="21" rx="3.5" fill="#d3d3d3" stroke="#a6a6a6"/><rect x="9.5" y="781.5" width="47" height="21" rx="3.5" fill="#d3d3d3" stroke="#a6a6a6"/><text x="33.0" y="797" font-size="14" fill="#a4a4a4" text-anchor="middle" xml:space="preserve" >Svc</text><rect x="59.5" y="781.5" width="59" height="21" rx="3.5" fill="#d3d3d3" stroke="#a6a6a6"/><text x="89.0" y="797" font-size="14" fill="#000" text-anchor="middle" xml:space="preserve" >RFOn</text><rect x="122.5" y="781.5" width="71" height="21" rx="3.5" fill="#d3d3d3" stroke="#a6a6a6"/><text x="158.0" y="797" font-size="14" fill="#000" text-anchor="middle" xml:space="preserve" >UpdateOn</text><rect x="197.5" y="781.5" width="58" height="21" rx="3.5" fill="#d3d3d3" stroke="#a6a6a6"/><text x="226.5" y="797" font-size="14" fill="#000" text-anchor="middle" xml:space="preserve" >IntRef</text><rect x="259.5" y="781.5" width="852" height="21" rx="3.5" fill="#d3d3d3" stroke="#a6a6a6"/><text x="263" y="797" font-size="14" fill="#000" xml:space="preserve" >a0158.1.csa has been saved.</text><rect x="1114.5" y="781.5" width="47" height="21" rx="3.5" fill="#d3d3d3" stroke="#a6a6a6"/><text x="1138.0" y="797" font-size="14" fill="#000" text-anchor="middle" textLength="24.5" lengthAdjust="spacingAndGlyphs" xml:space="preserve" >LCL</text><rect x="1164.5" y="781.5" width="117" height="21" rx="3.5" fill="#d3d3d3" stroke="#a6a6a6"/><text x="1223.0" y="797" font-size="12.5" fill="#000" text-anchor="middle" textLength="94" lengthAdjust="spacingAndGlyphs" xml:space="preserve" >2021/05/13-18:16</text><rect x="316" y="805" width="61" height="3" fill="#a8a8a8"/><defs><linearGradient id="bg" x1="0" y1="0" x2="0" y2="1"><stop offset="0" stop-color="#ececf0"/><stop offset="0.55" stop-color="#e0e0e4"/><stop offset="1" stop-color="#cbcbcf"/></linearGradient><linearGradient id="hd" x1="0" y1="0" x2="0" y2="1"><stop offset="0" stop-color="#33476a"/><stop offset="1" stop-color="#2a3a58"/></linearGradient><linearGradient id="xb" x1="0" y1="0" x2="0" y2="1"><stop offset="0" stop-color="#2b4f5c"/><stop offset="1" stop-color="#3f8a78"/></linearGradient></defs><rect x="1035" y="60.5" width="243.5" height="687.5" rx="4" fill="#80808a" stroke="#2d2d1e" stroke-width="2"/><path d="M1188.5,144 Q1188.5,136.5 1196,136.5 H1278.5 V748 H1188.5 Z" fill="#5b5b5b" stroke="#2d2d24"/><line x1="1189" y1="194.5" x2="1278" y2="194.5" stroke="#222" stroke-width="1.2"/><line x1="1189" y1="254.5" x2="1278" y2="254.5" stroke="#222" stroke-width="1.2"/><text x="1233.5" y="110.5" font-size="15.3" fill="#fff" text-anchor="middle" xml:space="preserve" >Main</text><text x="1234" y="161.6" font-size="15.3" fill="#e6e6e6" text-anchor="middle" textLength="62" lengthAdjust="spacingAndGlyphs" xml:space="preserve" >Electrical</text><text x="1234" y="179.8" font-size="15.3" fill="#e6e6e6" text-anchor="middle" xml:space="preserve" >Delay</text><text x="1233.5" y="230.2" font-size="15.3" fill="#e6e6e6" text-anchor="middle" textLength="69" lengthAdjust="spacingAndGlyphs" xml:space="preserve" >Constants</text><rect x="1034.5" y="36.5" width="244" height="36" rx="6" fill="#2c3b5a" stroke="#1a2438"/><path d="M1040.5,37 H1120 L1108,72 H1040.5 Q1035,72 1035,66.5 V42.5 Q1035,37 1040.5,37 Z" fill="#324466"/><text x="1045.2" y="61.8" font-size="17" fill="#fff" textLength="36.6" lengthAdjust="spacingAndGlyphs" xml:space="preserve" >Scale</text><rect x="1246.5" y="43" width="24" height="24.2" rx="5" fill="#8b96aa"/><rect x="1247.5" y="44" width="22" height="22.2" rx="4" fill="#17233a"/><rect x="1249" y="45.5" width="19" height="19.2" rx="3" fill="url(#xb)"/><rect x="1249.5" y="47" width="18" height="4.8" fill="#8896a4"/><path d="M1253.3,51 L1263.7,60.3 M1263.7,51 L1253.3,60.3" stroke="#fff" stroke-width="1.8"/><rect x="1040" y="82" width="143" height="75.5" rx="5" fill="rgba(0,0,0,0.25)"/><rect x="1040.5" y="82.5" width="142" height="73" rx="5" fill="url(#bg)" stroke="#3a3a3e"/><text x="1111.5" y="123.5" font-size="15.3" fill="#000" text-anchor="middle" xml:space="preserve" >Autoscale</text><rect x="1040" y="165" width="143" height="75.5" rx="5" fill="rgba(0,0,0,0.25)"/><rect x="1040.5" y="165.5" width="142" height="73" rx="5" fill="url(#bg)" stroke="#3a3a3e"/><text x="1111.5" y="197" font-size="15.3" fill="#000" text-anchor="middle" xml:space="preserve" >Autoscale</text><text x="1111.5" y="218" font-size="15.3" fill="#000" text-anchor="middle" xml:space="preserve" >All</text><rect x="1040" y="248" width="143" height="75.5" rx="5" fill="rgba(0,0,0,0.25)"/><rect x="1040.5" y="248.5" width="142" height="73" rx="5" fill="#80808a" stroke="#3e3e42"/><rect x="1036" y="328" width="150" height="81" rx="7" fill="#6aa6e4"/><rect x="1039" y="331" width="144" height="75" rx="5" fill="#3c3c44"/><rect x="1040" y="332" width="143" height="75.5" rx="5" fill="rgba(0,0,0,0.25)"/><rect x="1040.5" y="332.5" width="142" height="73" rx="5" fill="url(#bg)" stroke="#3a3a3e"/><text x="1111.5" y="358" font-size="15.3" fill="#000" text-anchor="middle" xml:space="preserve" >Scale</text><rect x="1047.5" y="375.5" width="128" height="20" fill="#d9d9dd" stroke="#bdbdc1"/><rect x="1048" y="376" width="127" height="1" fill="#c4c4c8"/><text x="1111.5" y="390.5" font-size="12.5" fill="#3c3c3c" text-anchor="middle" xml:space="preserve" >10 dB</text><rect x="1040" y="416" width="143" height="75.5" rx="5" fill="rgba(0,0,0,0.25)"/><rect x="1040.5" y="416.5" width="142" height="73" rx="5" fill="url(#bg)" stroke="#3a3a3e"/><text x="1111.5" y="442" font-size="15.3" fill="#000" text-anchor="middle" xml:space="preserve" >Reference Level</text><rect x="1047.5" y="459.5" width="128" height="20" fill="#d9d9dd" stroke="#bdbdc1"/><rect x="1048" y="460" width="127" height="1" fill="#c4c4c8"/><text x="1111.5" y="474.5" font-size="12.5" fill="#3c3c3c" text-anchor="middle" xml:space="preserve" >0 dB</text><rect x="1040" y="499" width="143" height="75.5" rx="5" fill="rgba(0,0,0,0.25)"/><rect x="1040.5" y="499.5" width="142" height="73" rx="5" fill="url(#bg)" stroke="#3a3a3e"/><text x="1111.5" y="525" font-size="15.3" fill="#000" text-anchor="middle" xml:space="preserve" >Reference Position</text><rect x="1047.5" y="542.5" width="128" height="20" fill="#d9d9dd" stroke="#bdbdc1"/><rect x="1048" y="543" width="127" height="1" fill="#c4c4c8"/><text x="1111.5" y="557.5" font-size="12.5" fill="#3c3c3c" text-anchor="middle" xml:space="preserve" >10 Div</text><rect x="1040" y="583" width="143" height="75.5" rx="5" fill="rgba(0,0,0,0.25)"/><rect x="1040.5" y="583.5" width="142" height="73" rx="5" fill="url(#bg)" stroke="#3a3a3e"/><text x="1111.5" y="609" font-size="15.3" fill="#000" text-anchor="middle" xml:space="preserve" >Y-Axis Spacing</text><rect x="1047.5" y="626.5" width="128" height="20" fill="#d9d9dd" stroke="#bdbdc1"/><rect x="1048" y="627" width="127" height="1" fill="#c4c4c8"/><rect x="1048" y="627" width="64" height="19" fill="#d4d4d8"/><rect x="1112" y="627" width="63" height="19" fill="#e2e2e6"/><text x="1080" y="641.5" font-size="12" fill="#3a3a3a" text-anchor="middle" xml:space="preserve" >LINEAR</text><text x="1144" y="641.5" font-size="12" fill="#a8a8aa" text-anchor="middle" xml:space="preserve" >log</text><rect x="1040" y="666" width="143" height="75.5" rx="5" fill="rgba(0,0,0,0.25)"/><rect x="1040.5" y="666.5" width="142" height="73" rx="5" fill="url(#bg)" stroke="#3a3a3e"/><text x="1111.5" y="692" font-size="15.3" fill="#000" text-anchor="middle" xml:space="preserve" >Scale Coupling...</text><rect x="1047.5" y="709.5" width="128" height="20" fill="#d9d9dd" stroke="#bdbdc1"/><rect x="1048" y="710" width="127" height="1" fill="#c4c4c8"/><text x="1111.5" y="724.5" font-size="12.5" fill="#3c3c3c" text-anchor="middle" xml:space="preserve" >Off</text><clipPath id="wmc"><rect x="1023.5" y="300" width="100" height="100"/></clipPath><g clip-path="url(#wmc)" style="mix-blend-mode:multiply"><g font-size="64" fill="#d9d9d9"><text style="font-family:'Liberation Serif',serif;font-weight:bold" x="204.4" y="369" textLength="52.3" lengthAdjust="spacingAndGlyphs">w</text><text style="font-family:'Liberation Serif',serif;font-weight:bold" x="258.8" y="369" textLength="52.3" lengthAdjust="spacingAndGlyphs">w</text><text style="font-family:'Liberation Serif',serif;font-weight:bold" x="313.2" y="369" textLength="50.9" lengthAdjust="spacingAndGlyphs">w</text><text style="font-family:'Liberation Serif',serif;font-weight:bold" x="369.4" y="369" textLength="15.5" lengthAdjust="spacingAndGlyphs">.</text><text style="font-family:'Liberation Serif',serif;font-weight:bold" x="388.8" y="369" textLength="34.7" lengthAdjust="spacingAndGlyphs">x</text><text style="font-family:'Liberation Serif',serif;font-weight:bold" x="421.7" y="369" textLength="38.3" lengthAdjust="spacingAndGlyphs">a</text><text style="font-family:'Liberation Serif',serif;font-weight:bold" x="471.7" y="369" textLength="34.6" lengthAdjust="spacingAndGlyphs">h</text><text style="font-family:'Liberation Serif',serif;font-weight:bold" x="506.0" y="369" textLength="39.4" lengthAdjust="spacingAndGlyphs">x</text><text style="font-family:'Liberation Serif',serif;font-weight:bold" x="548.9" y="369" textLength="64.1" lengthAdjust="spacingAndGlyphs">m</text><text style="font-family:'Liberation Serif',serif;font-weight:bold" x="614.6" y="369" textLength="19.1" lengthAdjust="spacingAndGlyphs">i</text><text style="font-family:'Liberation Serif',serif;font-weight:bold" x="638.4" y="369" textLength="30.0" lengthAdjust="spacingAndGlyphs">c</text><text style="font-family:'Liberation Serif',serif;font-weight:bold" x="666.3" y="369" textLength="39.5" lengthAdjust="spacingAndGlyphs">r</text><text style="font-family:'Liberation Serif',serif;font-weight:bold" x="707.4" y="369" textLength="40.1" lengthAdjust="spacingAndGlyphs">o</text><text style="font-family:'Liberation Serif',serif;font-weight:bold" x="748.2" y="369" textLength="52.6" lengthAdjust="spacingAndGlyphs">w</text><text style="font-family:'Liberation Serif',serif;font-weight:bold" x="801.8" y="369" textLength="37.4" lengthAdjust="spacingAndGlyphs">a</text><text style="font-family:'Liberation Serif',serif;font-weight:bold" x="837.7" y="369" textLength="40.1" lengthAdjust="spacingAndGlyphs">v</text><text style="font-family:'Liberation Serif',serif;font-weight:bold" x="878.7" y="369" textLength="38.7" lengthAdjust="spacingAndGlyphs">e</text><text style="font-family:'Liberation Serif',serif;font-weight:bold" x="920.8" y="369" textLength="17.6" lengthAdjust="spacingAndGlyphs">.</text><text style="font-family:'Liberation Serif',serif;font-weight:bold" x="939.7" y="369" textLength="37.3" lengthAdjust="spacingAndGlyphs">c</text><text style="font-family:'Liberation Serif',serif;font-weight:bold" x="976.7" y="369" textLength="38.0" lengthAdjust="spacingAndGlyphs">o</text><text style="font-family:'Liberation Serif',serif;font-weight:bold" x="1017.7" y="369" textLength="55.9" lengthAdjust="spacingAndGlyphs">m</text></g></g></svg></body></html>
